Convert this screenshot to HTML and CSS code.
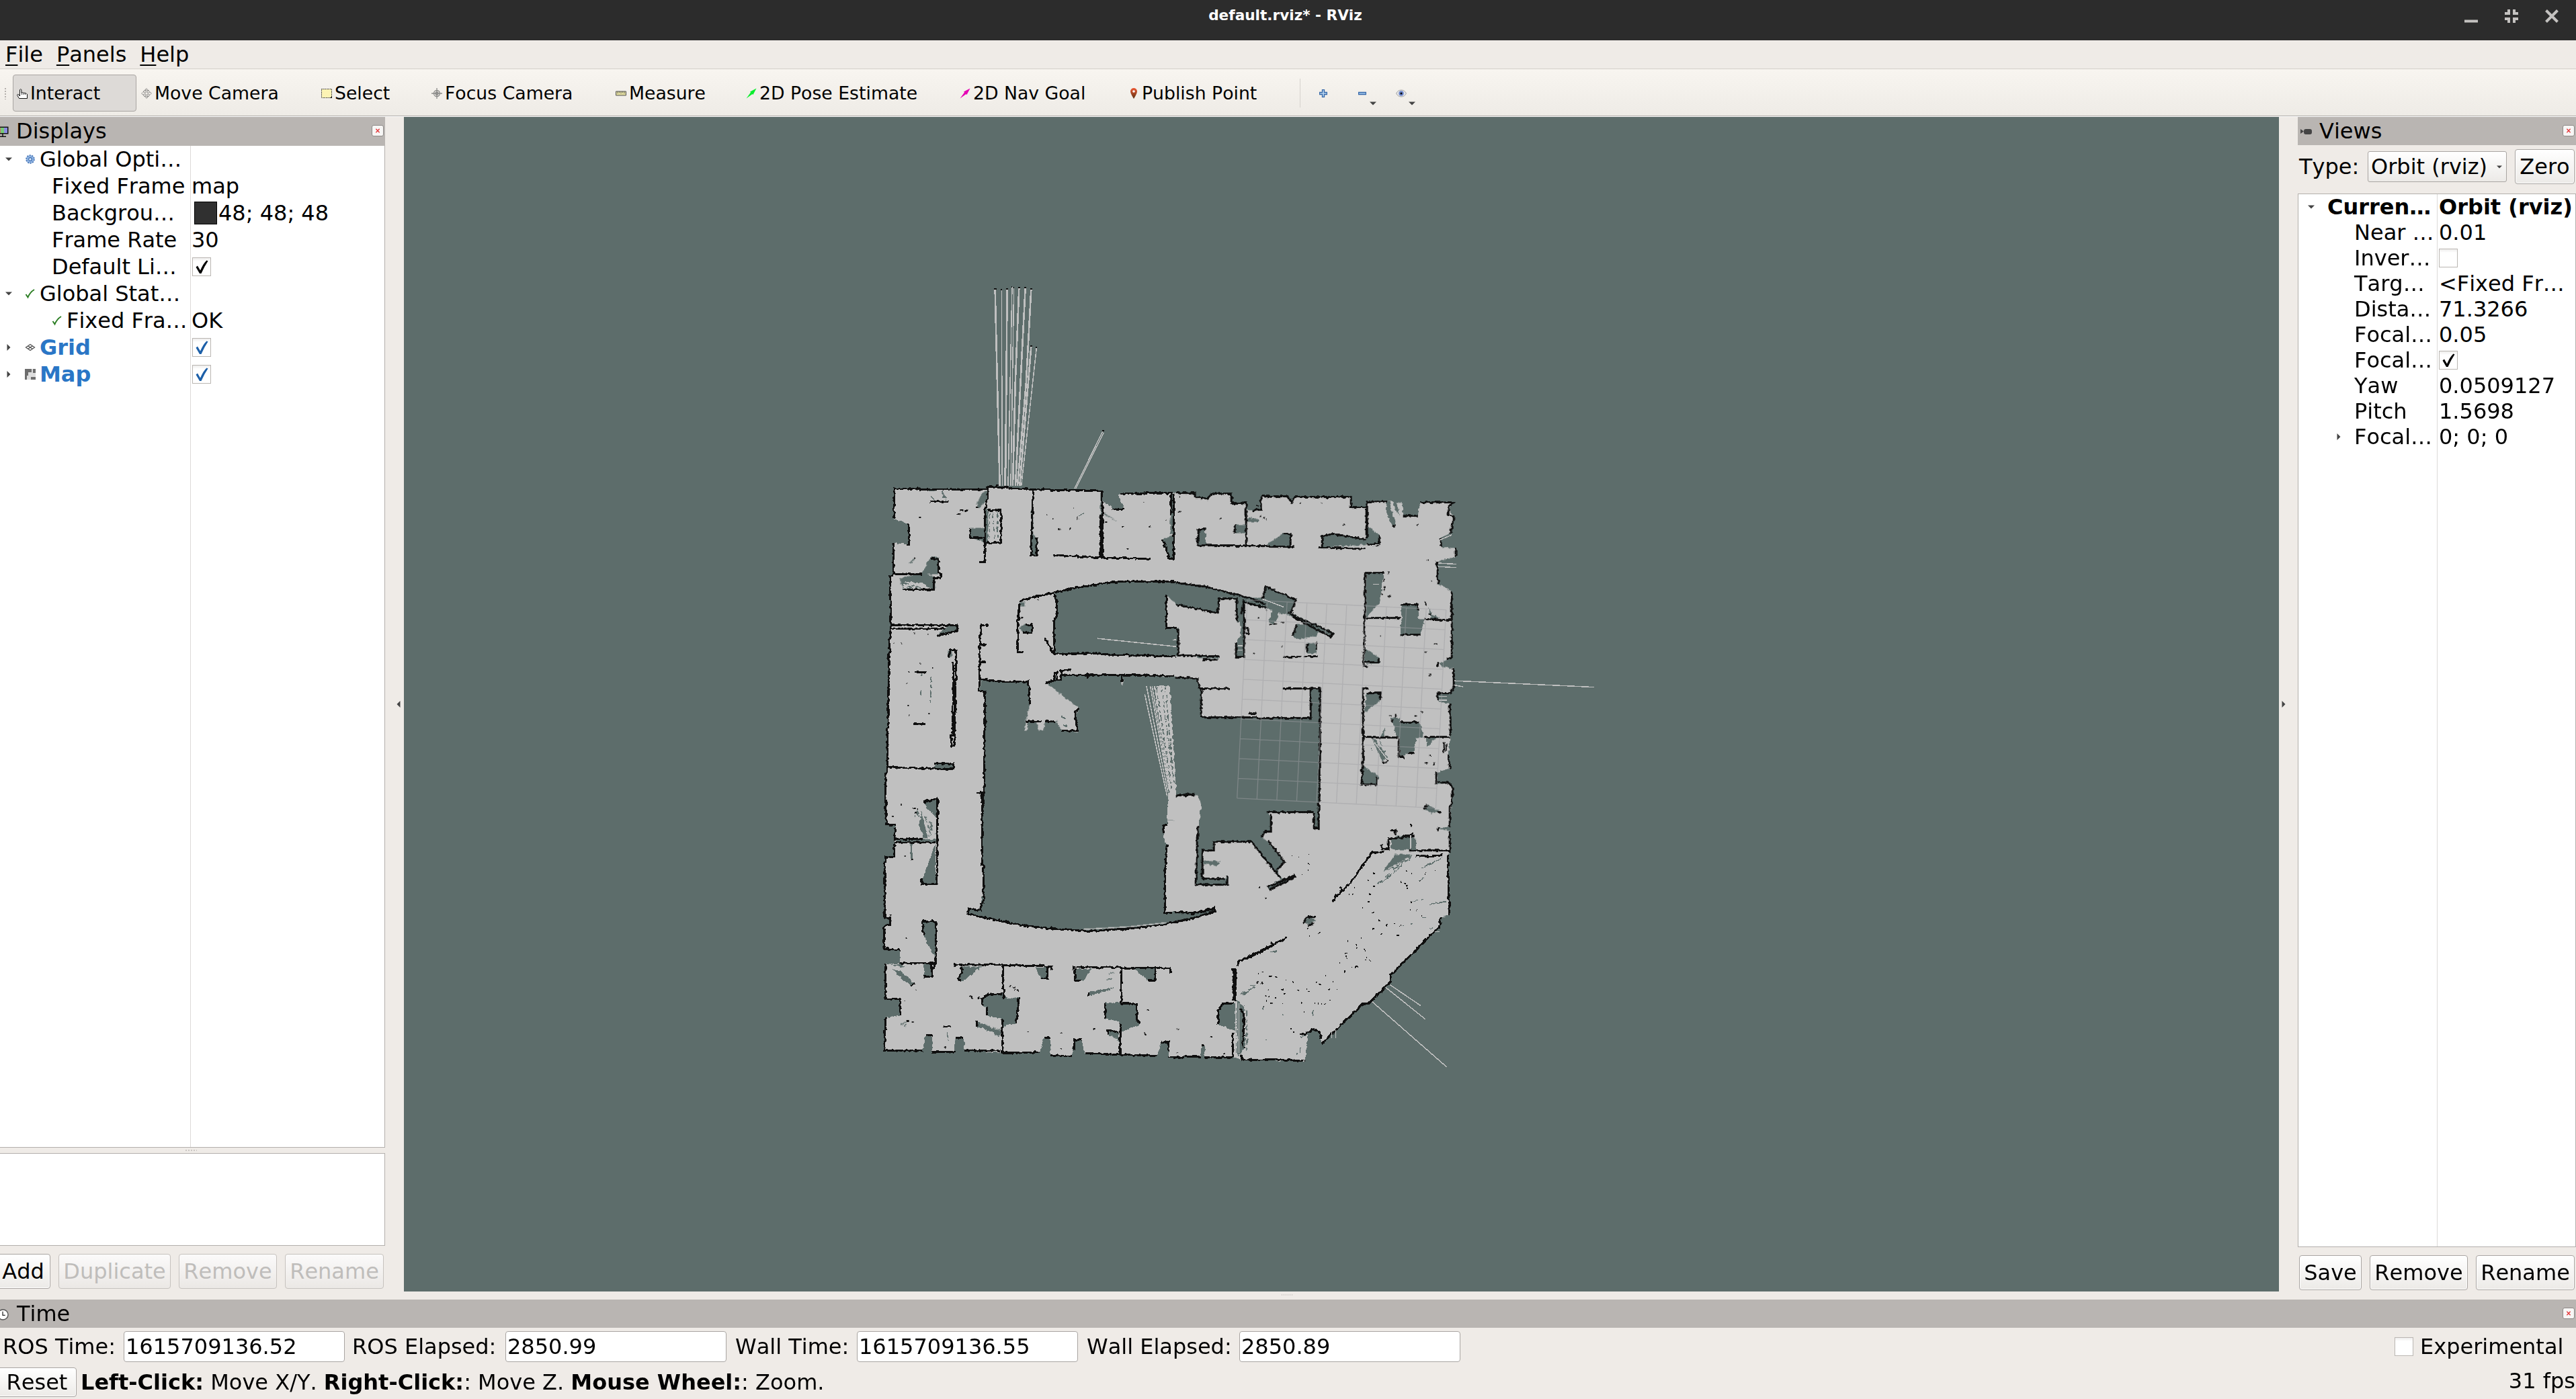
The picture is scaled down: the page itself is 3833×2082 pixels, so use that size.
FILE: index.html
```html
<!DOCTYPE html>
<html lang="en">
<head>
<meta charset="utf-8">
<title>default.rviz* - RViz</title>
<link rel="stylesheet" href="styles.css">
</head>
<body>
<svg class="defs" aria-hidden="true">
  <defs>
    <symbol id="i-close" viewBox="0 0 18 17"><path d="M6 5.500 12 11.500M12 5.500 6 11.500" stroke="#e4393c" stroke-width="1.600" fill="none"/></symbol>
    <symbol id="i-check" viewBox="0 0 28 28"><path d="M5.500 14.500 8 12.500 12 19.500 Q16.500 9 21.500 4.500 L23.500 5.500 Q18 13.500 13.500 24 L11 24 Z" fill="currentColor"/></symbol>
    <symbol id="i-tick" viewBox="0 0 16 16"><path d="M1.500 9 4.500 13.500 Q7.500 6 14 2" stroke="#2a7d22" stroke-width="1.900" fill="none"/></symbol>
    <symbol id="i-down" viewBox="0 0 10 6"><path d="M0 .5h10L5 5.500z" fill="#444"/></symbol>
    <symbol id="i-right" viewBox="0 0 6 10"><path d="M.5 0v10L5.500 5z" fill="#444"/></symbol>
    <symbol id="i-arrow" viewBox="0 0 16 16"><path d="M.5 15.500 7 6.500 6 5.500 15.500.5 10.500 10 9.500 9z" fill="currentColor"/></symbol>
  </defs>
</svg>

<header class="titlebar">
  <h1>default.rviz* - RViz</h1>
  <div class="window-buttons">
    <svg viewBox="0 0 20 20"><path d="M0 17.500h20" stroke="#c4c2c0" stroke-width="4"/></svg>
    <svg viewBox="0 0 20 20"><path d="M0 6h6V0M14 0v6h6M0 14h6v6M14 20v-6h6" stroke="#c4c2c0" stroke-width="4" fill="none"/></svg>
    <svg viewBox="0 0 20 20"><path d="M1.500 1.500 18.500 18.500M18.500 1.500 1.500 18.500" stroke="#c4c2c0" stroke-width="4"/></svg>
  </div>
</header>

<nav class="menubar"><span><u>F</u>ile</span><span><u>P</u>anels</span><span><u>H</u>elp</span></nav>

<div class="toolbar">
  <i class="grip"></i>
  <div class="tool active t-interact"><svg viewBox="0 0 16 16"><path d="M4.500 9V2.500q1.200-1.800 2.400 0V7q1.500-1.200 2.500.3 1.600-.9 2.500.5 1.800-.8 2.600.7 1 .2 1 1.500v5.500h-12L.5 10.500q.6-2.200 2.500-.5l1.500 2z" fill="#fff" stroke="#111" stroke-width="1"/><path d="M7.500 7v3M10 7.500V10M12.500 8v2" stroke="#111" stroke-width=".8"/></svg>Interact</div>
  <div class="tool t-move"><svg viewBox="0 0 16 16"><path d="M8 .5 11 4H9v3h3V5l3.500 3-3.500 3V9H9v3h2l-3 3.500L5 12h2V9H4v2L.5 8 4 5v2h3V4H5zM3.500 4.500Q8 1.500 12.500 4.500M3.500 11.500Q8 14.500 12.500 11.500" fill="none" stroke="#666" stroke-dasharray="1 .6"/></svg>Move Camera</div>
  <div class="tool t-select"><svg viewBox="0 0 16 16"><path d="M.5 1.500h15v13H.5z" fill="#fcf3b4" stroke="#333" stroke-dasharray="1.500 1"/><path d="M13 15h3v-3z" fill="#111"/></svg>Select</div>
  <div class="tool t-focus"><svg viewBox="0 0 16 16"><path d="M8 0v16M0 8h16M3.500 8a4.500 4.500 0 1 0 9 0 4.500 4.500 0 1 0-9 0M6 8a2 2 0 1 0 4 0 2 2 0 1 0-4 0" fill="none" stroke="#8a8a88" stroke-width="1.300"/></svg>Focus Camera</div>
  <div class="tool t-measure"><svg viewBox="0 0 16 16"><path d="M.5 5h15v6H.5z" fill="#ddd89c" stroke="#555"/><path d="M3 5v3M5.500 5v2M8 5v3M10.500 5v2M13 5v3" stroke="#555" stroke-width=".8"/></svg>Measure</div>
  <div class="tool t-pose"><svg class="green"><use href="#i-arrow"/></svg>2D Pose Estimate</div>
  <div class="tool t-nav"><svg class="magenta"><use href="#i-arrow"/></svg>2D Nav Goal</div>
  <div class="tool t-point"><svg viewBox="0 0 16 16"><defs><linearGradient id="pin" x2="0" y2="1"><stop offset="0" stop-color="#ef5a35"/><stop offset="1" stop-color="#5a3010"/></linearGradient></defs><path d="M8 0a5 5 0 0 1 5 5q0 3-5 11Q3 8 3 5a5 5 0 0 1 5-5z" fill="url(#pin)"/><circle cx="8" cy="5" r="1.800" fill="#fff"/></svg>Publish Point</div>
  <i class="sep"></i>
  <div class="mini"><svg viewBox="0 0 12 12"><path d="M4.500.5h3v4h4v3h-4v4h-3v-4h-4v-3h4z" fill="#b6d3ef" stroke="#3567a8" stroke-width="1.300"/></svg></div>
  <div class="mini"><svg viewBox="0 0 12 12"><path d="M.5 4.500h11v3H.5z" fill="#a9cdf0" stroke="#3567a8" stroke-width="1.300"/></svg><svg class="drop"><use href="#i-down"/></svg></div>
  <div class="mini eye"><svg viewBox="0 0 16 12"><path d="M.5 6Q3 1 8 1t7.500 5Q13 11 8 11T.5 6z" fill="#e4e4e4" stroke="#a5a5a5"/><circle cx="8" cy="6" r="3.700" fill="#6c86cc"/><circle cx="8" cy="6" r="1.500" fill="#000"/></svg><svg class="drop"><use href="#i-down"/></svg></div>
</div>

<main class="workspace">
  <section class="displays">
    <div class="dock-title"><svg class="monitor" viewBox="0 0 18 16"><path d="M0 .5h16.500v11H0" fill="#111"/><path d="M0 2h6v8H0z" fill="#c76d6d"/><path d="M5 2h5v8H5z" fill="#77c977"/><path d="M10 2h5v8h-5z" fill="#8b8be0"/><path d="M8 11v4M3 15.200h10" stroke="#111" stroke-width="1.500"/></svg><span>Displays</span><svg class="close"><use href="#i-close"/></svg></div>
    <div class="tree">
      <div class="row"><div class="name"><svg class="down"><use href="#i-down"/></svg><svg class="ico" viewBox="0 0 16 16"><circle cx="8" cy="8" r="5.800" fill="#8fb4e3" stroke="#4a78b8" stroke-width="2" stroke-dasharray="2.200 1.400"/><circle cx="8" cy="8" r="4.800" fill="#8fb4e3"/><circle cx="8" cy="8" r="2.300" fill="#dbe8f8" stroke="#3d6cae" stroke-width="1.200"/></svg>Global Opti…</div></div>
      <div class="row child"><div class="name">Fixed Frame</div><div>map</div></div>
      <div class="row child"><div class="name">Backgrou…</div><div><i class="swatch"></i>48; 48; 48</div></div>
      <div class="row child"><div class="name">Frame Rate</div><div>30</div></div>
      <div class="row child"><div class="name">Default Li…</div><div><i class="box"><svg><use href="#i-check"/></svg></i></div></div>
      <div class="row"><div class="name"><svg class="down"><use href="#i-down"/></svg><svg class="ico"><use href="#i-tick"/></svg>Global Stat…</div></div>
      <div class="row child"><div class="name"><svg class="ico"><use href="#i-tick"/></svg>Fixed Fra…</div><div>OK</div></div>
      <div class="row on"><div class="name"><svg class="right"><use href="#i-right"/></svg><svg class="ico" viewBox="0 0 16 16"><path d="M8 3.500 14.500 8 8 12.500 1.500 8zM4.700 5.700l6.600 4.600M11.300 5.700 4.700 10.300" fill="none" stroke="#555" stroke-width="1.300"/></svg>Grid</div><div><i class="box"><svg><use href="#i-check"/></svg></i></div></div>
      <div class="row on"><div class="name"><svg class="right"><use href="#i-right"/></svg><svg class="ico" viewBox="0 0 16 16"><path d="M0 0h16v16H0z" fill="#ddd"/><path d="M0 0h10v5H5v5H3v6H0zM12 0h4v6h-4zM9 12h7v4H9z" fill="#6d6d6d"/></svg>Map</div><div><i class="box"><svg><use href="#i-check"/></svg></i></div></div>
    </div>
    <div class="dots"></div>
    <div class="help"></div>
    <div class="buttons left-buttons"><button class="b-add">Add</button><button class="b-dup" disabled>Duplicate</button><button class="b-rem" disabled>Remove</button><button class="b-ren" disabled>Rename</button></div>
  </section>

  <div class="splitter"><svg viewBox="0 0 6 10"><path d="M5.500 0v10L.5 5z" fill="#444"/></svg></div>

  <svg class="view" viewBox="601 174 2790 1748">
    <defs>
      <filter id="cells" filterUnits="userSpaceOnUse" x="1250" y="380" width="1180" height="1260" color-interpolation-filters="sRGB">
        <feTurbulence type="fractalNoise" baseFrequency=".18" numOctaves="2" seed="7" result="m"/>
        <feDisplacementMap in="SourceGraphic" in2="m" scale="5" xChannelSelector="R" yChannelSelector="G"/>
      </filter>
    </defs>
    <g filter="url(#cells)" class="map">
      <!-- scanned floor, one outline per quarter of the building -->
      <g class="floor">
        <path transform="translate(1300 400) scale(.3333 .523)" d="M92,625L505,628 508,618 710,628 1018,632 1025,662 1070,683 1118,683 1090,640 1350,637V1568H56L52,1450 60,1420 66,1200 72,1025 78,1010 72,875 88,868 90,780 158,785V725L92,712Z"/>
        <path transform="translate(1750 600) scale(.3333 .523)" d="M-3,255L85,256 90,268 140,272 160,257 248,258V285L312,288 318,305 378,303 380,265H500L515,283 528,267H780L782,295H848L852,278H940L1008,285 1015,320H1080L1088,282H1240L1215,300 1242,325 1225,370 1175,385 1185,410 1250,412V437L1165,450 1170,515 1230,535V725L1170,740 1185,750 1238,755 1240,805 1225,825 1168,828 1172,850 1222,855 1225,945 1215,1000 1222,1040 1165,1050V1085L1220,1080 1235,1095 1230,1140 1222,1205 1170,1210 1222,1218V1280L1215,1285 1218,1455 1180,1465 1178,1490 1060,1565H-3Z"/>
        <path transform="translate(1300 1180) scale(.38267 .33333)" d="M45,0L48,140 85,145 82,207 80,285 45,290 42,555 65,562 62,590 40,598V693L103,703V760L45,765V920L103,925V995L45,1005 42,1150 190,1152 200,1085 228,1088V1158L310,1162 318,1095 350,1097 355,1152 500,1160H645L662,1092 688,1095V1172L770,1175 780,1103H808L822,1163 950,1168 1100,1172 1120,1112H1145L1148,1180H1270L1275,1130H1288L1285,1180H1410L1430,1190H1568V0Z"/>
        <path transform="translate(1800 1100) scale(.33333)" d="M0,500H1060L1070,785 1030,795 1025,840 985,875 810,1050 808,1080 710,1180 685,1180 500,1360 495,1320 465,1293 440,1310 425,1440 140,1430 105,1420 0,1418Z"/>
      </g>

      <!-- unexplored pockets -->
      <g class="void">
        <g transform="translate(1300 400) scale(.3333 .523)">
          <path d="M806,922L900,908 1000,896 1130,889 1352,892V950L1335,945 1308,928V1022H1352V1103L1060,1098 960,1093 820,1096 806,1095V995L818,990V950Z"/>
          <path d="M497,1205L475,1200 480,1168 570,1174 692,1175 697,1240 680,1285 675,1315 683,1315 690,1290 730,1290 735,1315 758,1312 765,1290 815,1285 838,1315 910,1318 900,1270 918,1250 770,1180 805,1172V1150L820,1172H835V1155L1105,1155 1108,1185 1115,1185 1112,1157 1352,1162V1520L1340,1568H484L490,1490Z"/>
          <path d="M430,740L497,735V685H512V780L430,765ZM455,682L480,640 507,632V655L470,682ZM712,640V755L728,765V815H702V700ZM1290,770L1340,757V825H1320ZM650,1020L680,1010 710,1012 708,1035H665ZM280,1045L330,1015H375V1030ZM240,835L258,820H292L290,870H215ZM115,880L225,866 275,878V912H130ZM270,1409H355V1422H270ZM225,1520L288,1508V1568ZM332,1088H350V1105H332ZM652,948H672V960H652ZM125,862L180,825H185ZM1013,640H1022V820H1013ZM1325,640H1335V755H1325ZM1030,695L1080,716 1085,718 1030,700Z"/>
        </g>
        <g transform="translate(1750 600) scale(.3333 .523)">
          <path d="M-3,512L130,522 300,550 385,556 400,522 535,560 512,597 705,652 700,665 520,608 455,595V610L435,630 410,622 430,590 300,565 303,720H270V675L290,660 285,622H268L272,560 200,552 190,557V597L-3,573ZM-3,640H12V717H-3ZM520,665L540,628H600L650,645 620,662 550,672ZM585,682H620L628,712H585Z"/>
          <path d="M-3,780L95,785 107,812 113,815V893L600,897V815L643,812 640,1160 637,1210H615V1163H408L428,1185 425,1220 395,1222 380,1237 400,1243 485,1305 450,1328 475,1355 532,1340 536,1348 415,1385 408,1377 465,1355 335,1248 172,1247 168,1270H118V1352L210,1355 225,1345 228,1370H88L97,1240 112,1140 95,1113 -3,1118Z"/>
          <path d="M100,358H133V403H95ZM262,345H312V370H262ZM318,325L370,330 365,338H318ZM400,405L480,370H512V410ZM652,378L700,370 848,388V348L908,375V400L655,410ZM940,280L952,280 980,345 965,350 940,310ZM968,280L982,280 998,318 985,310ZM850,485H925L915,545 905,570 850,608ZM1005,570H1078L1085,615H1108L1090,658H1003ZM842,698L908,725V740H842ZM850,825H913V845L842,880ZM912,950L935,920 925,950ZM960,895L1000,895V950H985ZM1000,905H1088L1105,950 1068,952 1065,990 1000,1005 993,955ZM875,955L885,955 945,1008 920,1020ZM835,1033L905,1060 895,1085H830ZM1105,1155L1120,1142 1185,1163 1140,1165ZM960,1270V1240L985,1232H1045L1070,1240V1270ZM920,1335L980,1283 1055,1285ZM1115,950L1160,952 1120,978ZM1125,580L1145,603 1180,610 1140,615ZM118,1300L200,1305 185,1316 125,1312ZM-3,1448L80,1450 165,1438V1445L-3,1475ZM572,1470L600,1462 620,1470 600,1485 575,1482ZM90,720H185V726H90Z"/>
        </g>
        <g transform="translate(1300 1180) scale(.38267 .33333)">
          <path d="M422,0L428,420 418,490 415,525 370,515 365,540 500,575 600,597 720,610 850,617 1000,605 1130,587 1250,555 1325,530 1322,515 1290,520 1250,537 1170,530 1133,537V350L1140,235 1125,190 1127,145 1143,140 1140,0Z"/>
          <path d="M195,40L248,30V115L212,75ZM180,100L190,105 210,205H195L178,140ZM85,208H245V222H85ZM165,85L172,70 178,110ZM142,225H152V300H145ZM240,228V408H188V385ZM192,575H242V740L195,640ZM70,785L110,800 155,850 145,862 120,840ZM195,762H228V822H195ZM345,778L420,775 350,840 330,835ZM628,780H675V830H650ZM785,785H850L815,838H785ZM1010,785H1093V838H1070ZM420,920L445,902 505,895 520,920 565,912 555,1025 500,1045V1008L440,995V960L420,950ZM835,890L935,868V872L840,905ZM900,940L960,935 1022,943V1010L1038,1025 1030,1040 965,1065 955,1020 900,1010ZM400,1020L495,1065V1085L405,1045ZM912,1060L955,1072V1120L945,1095 915,1080ZM1340,970L1355,940H1405V1060L1340,1035ZM1410,920L1440,960 1445,1130 1415,1180ZM285,1045L292,1110 285,1090ZM60,765H110L120,780ZM1425,905L1480,865 1445,900ZM1540,710L1568,705V712Z"/>
        </g>
        <path transform="translate(1800 1100) scale(.33333)" d="M265,952L300,940 298,950ZM755,645L800,610 850,575 770,640ZM930,580L1045,525 990,560ZM905,728L955,715ZM980,735L1060,722V727L990,739ZM948,796H965V799H948ZM930,635L955,615V620ZM455,1210H463V1235H456ZM1020,790L1060,785V788Z"/>
      </g>

      <!-- partially scanned areas, streaked by the laser -->
      <g class="floor" transform="translate(1300 400) scale(.3333 .523)">
        <path d="M1250,1188H1322L1352,1500V1568H1310L1318,1460Z"/>
        <path d="M515,690H565V778H515ZM130,908L140,890 215,895 265,913Z"/>
      </g>
      <g class="streak" transform="translate(1300 400) scale(.3333 .523)">
        <path d="M1262,1190L1330,1480M1285,1190L1336,1440M1302,1190L1342,1470M518,695V775M532,692L540,775M552,692V770M130,893L240,912M150,905L230,912M250,632H280M255,645L275,660M305,632L325,660M310,650H325M215,1150V1160M212,1200V1215M255,1160V1240M918,705L935,693M838,1275L855,1278M845,1300H860M185,1545V1568M212,1545L218,1568"/>
      </g>
      <g class="streak" transform="translate(1800 1100) scale(.33333)">
        <path d="M740,10L775,95M725,35V55M760,10L790,80M785,615L860,560M800,585L905,520M820,580L900,530M135,1140L205,1105M180,1100L215,1100M905,725L955,715M750,645L770,630M980,845H995M118,1190V1410M128,1280V1400M405,1380V1400M390,1400V1410M155,1190V1210M320,1232H326M248,1343H254M218,1248H222M240,1195V1210M970,30L1000,5M405,1330L430,1320M140,1350V1420M860,832H868M895,825H903"/>
      </g>
      <g class="streak" transform="translate(1300 1180) scale(.38267 .33333)">
        <path d="M200,105L225,200M215,130L235,155M212,150L240,180M225,135V165M195,150L220,205M350,775H410M430,1035L495,1060M440,1050L490,1090M450,1055L495,1080M905,835L935,830M915,810L935,800M105,1035L130,1020M120,1045L130,1030M925,1085L950,1100M520,920L540,925M1450,970V1160"/>
      </g>

      <!-- walls -->
      <g class="wall">
        <g transform="translate(1300 400) scale(.3333 .523)">
          <path d="M92,712V625L250,628 505,628M497,690L508,655V620L570,622 710,628 1018,632 1022,690V820M1013,700V820M1065,683H1118M1100,640L1335,637M158,725V785H145M90,780V868L215,869M88,872L72,875 78,1010 70,1060 66,1200 60,1420 52,1450 56,1568"/>
          <path d="M497,690V782V835H472M430,740V765H495M510,688H568V780H497M452,680H470M712,630L708,700 702,815H728V765M805,815L1025,822 1235,825M1340,640V825H1320L1290,770M1328,640V700"/>
          <path d="M652,945L730,932 900,908 1050,893 1130,889 1350,891M652,950L645,1000 642,1090H667M665,1035H708V1012H680M806,925L818,950V992L806,997V1095M765,1050L805,1097 960,1094 1060,1098 1350,1103M768,1178L805,1172V1150H818V1172H835V1142H880M835,1155L1000,1155 1240,1157 1340,1160M955,1150V1165M1110,1155V1175M1308,928V1022H1350"/>
          <path d="M510,1015H480L474,1070H505M474,1070V1120H503M474,1120V1168L570,1174 640,1175 692,1174 697,1240M680,1287H750M765,1287H810M838,1315H910L898,1262 918,1250M474,1168L470,1200 497,1204 492,1490H459M489,1490L484,1568"/>
          <path d="M75,1015H375V1030L280,1045M75,1024H320M368,1085H343L335,1105M367,1085V1140L360,1358H348V1325M357,1120L352,1330M60,1418L355,1424V1408H270M182,1148H236M178,1295H230M125,913H270V880H300V865M290,825V868M255,825H292M250,662H335M225,1520L285,1507 288,1568"/>
        </g>
        <g transform="translate(1750 600) scale(.3333 .523)">
          <path d="M0,255L85,256V268L140,272 160,257 248,258V285H312V404M345,305L378,303 380,265H500L515,283 528,267H780V295H848M852,385V280H940M1012,320H1080M1088,282H1240L1215,295V318L1242,325 1225,370M1178,385L1185,410M1250,412V437M1165,450L1170,515M1230,535V725L1208,728M1168,738V750M1238,755L1240,805 1225,825H1168V845M1222,855L1225,945M1215,1000L1222,1040M1163,1050V1085M1165,1078L1215,1080 1235,1095 1230,1140 1222,1150V1205M1170,1205V1218M1222,1218V1280"/>
          <path d="M95,404L312,406 530,409M100,358L97,400M100,358H130M262,345V370M480,372H512V408M635,410L845,415M652,410V378L700,372 780,380 848,388M850,300V385M908,375V403H850M965,350H980"/>
          <path d="M0,511L130,522 300,550 400,572M500,597L705,655 690,665 520,608M385,556L400,522 535,560 512,597M300,565L400,582M0,573L185,597 193,555H270V622M290,600L303,560V722H268V680M0,642L10,645V717L190,720M120,730H185M520,662L540,630M480,722H560M570,720H632M585,685V710M300,640H322V655H300"/>
          <path d="M925,483H845L842,610 838,745M845,612H1000M1110,615L1228,617M1005,572H1078V590M1003,658H1092M836,748H855M842,738H905V725M857,812H835V1000L828,1085H895V1065M850,825H913V845M838,950L990,952M1110,950H1222M1000,907H1088M993,955V1005H1020M1035,995H1065"/>
          <path d="M0,782L60,780 95,785 107,812H240M113,815V893L600,897V815M475,812H643L642,1000 636,1210H615V1165M615,1163H405M425,1170V1220H395L380,1237M410,1245L485,1305 450,1328M0,1117L80,1112M97,1205L88,1370H228V1345M215,1352H118V1272H168V1247H335L465,1350M408,1378L532,1342M415,1385L536,1347M0,1475L90,1463 172,1445V1438L80,1452 0,1448M1105,1155L1120,1143M1170,1163H1185M955,1215H980V1230M920,1255V1268H950V1240L1065,1232M1040,1272L1222,1273M1090,1287H1115M570,1480L580,1463 622,1462M590,1487L615,1480M325,883H360"/>
        </g>
        <g transform="translate(1300 1180) scale(.38267 .33333)">
          <path d="M45,0L48,140 85,143M82,155V207L190,205M82,222H240M80,225V288H45L42,400V555M42,560H65V590H48L40,600V693L103,703M103,762H240V735M195,38L248,28V205L245,408H188V380M195,640L190,575H242V760L232,785M225,765V822H195M46,765V920H103V990M46,1005L42,1150 190,1152M200,1083H230M228,1158H310L315,1150M318,1095H348M355,1152H495M145,862L158,852M270,1042H298"/>
          <path d="M422,0V320L428,325V490L418,495V525L370,517 365,540 500,573 600,595 720,609 850,617 1000,605 1130,587 1250,557 1325,532V512L1250,537 1170,532M1160,535H1133L1133,350 1140,235M1127,180V145L1143,140M1180,12H1250"/>
          <path d="M314,780V765L500,768 690,775V792M340,775L345,800 328,825 335,840M503,770L505,920M675,780V830H650M775,790V777L960,780 1155,783V808M783,785V838H808M963,790V940L1022,943V1010L1035,1030M960,1030L958,1165M1093,785V838H1070M835,890V905M900,940V1008M565,912L555,1025M500,1010V1160H645M662,1094H690M688,1172L770,1175M780,1150V1103H810M822,1163L950,1168 1100,1174M1118,1113H1145V1150M1145,1180L1270,1178M1275,1128H1288M1285,1180H1395M402,1018V1045M422,950V920L445,900H500M440,960V995M1340,1035V970L1358,940H1400M1400,787V930M1390,787H1410M1408,790V930M1396,1068V1180M912,1080V1060L955,1070M1415,775L1420,752 1480,725 1540,690"/>
        </g>
        <g transform="translate(1800 1100) scale(.33333)">
          <path d="M780,505L723,507 640,625 600,670 560,705 547,728M580,660L600,680M128,1010V993L270,925 345,888M270,905L285,925M1062,515L1070,785M1030,795L1025,840 985,875 850,1012 810,1050V1080L710,1180 685,1180 500,1360M497,1335L490,1310 465,1295 430,1315 405,1318M140,1410L150,1433 300,1430 425,1437M137,1200L153,1230V1300L145,1370M860,430L905,425M920,520L960,525 1040,518M455,795H475"/>
        </g>
      </g>
      <g class="speck">
        <path transform="translate(1800 1100) scale(.33333)" d="M367,522h3M392,525h6M438,517h5M438,558h8M440,585h5M412,605h5M218,661h6M248,711h7M435,842h3M442,879h4M487,867h4M730,600h8M733,658h5M707,630h3M710,692h9M705,730h8M680,752h4M727,775h5M755,811h6M787,832h5M820,824h6M765,870h5M838,880h4M848,640h6M875,592h4M900,600h6M880,665h5M960,600h3M1005,590h3M898,728h4M920,763h5M893,762h4M945,790h3M850,830h3M730,845h4M615,900h4M672,890h7M650,920h6M655,930h6M690,943h6M605,953h8M607,970h6M608,978h6M698,975h5M693,988h6M715,988h6M578,998h4M632,1017h5M648,1017h14M600,1037h6M517,1055h5M548,1083h4M478,1087h3M490,1095h7M432,1115h4M438,1126h5M392,1122h8M370,1083h5M335,1077h5M320,1115h10M325,1120h7M330,1138h7M292,1062h8M268,1060h8M238,1038h4M232,1085h4M235,1095h8M262,1148h8M292,1154h6M272,1178h6M320,1183h4M405,1182h5M467,1178h4M482,1178h4M497,1182h4M512,1182h5M535,1163h4M532,1120h5M568,1117h4M362,1290v6M372,1306h6M420,1218h4M248,1170h4M215,1048h4M898,385h6M985,75h6M1000,105v14M965,108h5M770,105h6M790,95h8M850,83h20M885,60h30M635,690h8M620,690h5M645,662h4M435,790h10M935,632h4M870,645h5M880,655h4"/>
        <path transform="translate(1300 400) scale(.3333 .523)" d="M385,688h14M372,698h12M410,688h8M202,709h8M182,822h6M768,702h4M800,712h6M825,741h6M875,740h4M910,710h3M888,678h3M1110,734h8M1228,734h8M1033,720h8M1130,797h5M1300,716h4M1203,665h4M205,1125h4M153,1147h6M260,1135h6M147,1179h4M150,1243h6M157,1272h4M243,1265h8M85,1065h4M120,1067h4M240,1042h4M120,1524h4M83,1558h6M180,1038h5M545,616h14M730,940h8M655,992h15"/>
        <path transform="translate(1750 600) scale(.3333 .523)" d="M12,308h8M15,267h6M195,328h8M550,283h8M650,283h4M743,345h8M1072,347h8M370,320h8M385,328h10M400,330h8M360,292h8M948,478v8M930,500v8M930,520v12M920,540v8M945,550h10M1122,447h5M910,663h5M1155,685h12M1112,708h5M1130,773h8M1065,890h10M1095,878h8M950,888h12M965,900v10M980,885v12M1110,1025h14M1130,1000h8M1150,1022v10M1048,1202h8M365,610h6M345,712h4M470,692h4M625,680v25M1115,565v12M1130,600h10M1195,965v30M1205,970v20M400,590h4M420,630h8M438,628h12M470,625h12M1140,505h4M920,1022h25"/>
        <path transform="translate(1300 1180) scale(.38267 .33333)" d="M105,52h4M72,105h6M152,70h10M170,68v8M160,90h10M142,300h12M122,280v6M65,547h4M125,650h5M120,930h2M160,878h5M375,905l8,12M405,915h8M415,918h5M530,860h6M545,865v6M548,880h6M562,880v6M598,1065h8M725,1070h8M853,1056h8M725,1143h7M1062,970h8M1050,1074l10,8M1182,1050v8M1308,1090h8M1178,1162h5M272,1133l6,6M125,1018h12M148,1024h8M375,1145l15,5M1495,840v12M1510,850v6M1523,905h6M1535,880h4M1565,822h4M1545,938h6M1523,472h6M1497,422h5M1515,957h3M1362,1160v6M1512,798h4M1436,985h8M1438,1010h6M1436,1050h8M1440,1080h6M1432,1110h8M1436,1135h6"/>
      </g>
    </g>

    <!-- single laser returns that escaped the building -->
    <g class="map ray">
      <g transform="translate(1300 400) scale(.3333 .523)">
        <path class="wide" d="M542,60L552,330 563,618M596,60L588,618M649,55L632,330 621,618M677,55L655,330 633,618M703,60L680,330 642,618M703,222L652,618"/>
        <path d="M571,60L574,618M618,52L600,618M626,55L612,618M727,225L659,618M595,300L584,618M1023,462L897,625M1027,466L903,625M1000,1052L1350,1075M1335,1057L1350,1055M1210,1210L1310,1500M1218,1188L1314,1490M1235,1188L1318,1480M1243,1188L1320,1470"/>
      </g>
      <g transform="translate(1750 600) scale(.3333 .523)"><path d="M1242,790L1350,793 1865,808M1240,802L1282,807M1170,455L1250,458M1170,465L1250,468M1172,835H1210M1172,845H1210M275,690H298M275,703H298M880,515H905M385,557L480,580M855,408L905,402M1045,1235V1270M885,965L945,1015M1175,390L1230,375"/></g>
      <g transform="translate(1300 1180) scale(.38267 .33333)"><path d="M815,609L1000,597 1140,579"/></g>
      <g transform="translate(1800 1100) scale(.33333)"><path d="M805,1097L942,1190M785,1108L962,1250M725,1172L1058,1464M115,1180V1420M122,1180V1420M130,1180V1400M435,1320L420,1440M562,1300V1335M545,1305V1335M1005,860H1025M897,430V485"/></g>
    </g>
    <g class="map speck"><path transform="translate(1300 400) scale(.3333 .523)" d="M537,57h12M568,59h4M591,58h10M614,51h4M623,54h3M645,53h10M672,53h8M699,57h9M698,219h10M724,224h5M1020,461h10"/></g>
    <path class="grid" transform="matrix(29.57 1.464 -1.53 29.500 1856 892.900)" d="M0,0V10M1,0V10M2,0V10M3,0V10M4,0V10M5,0V10M6,0V10M7,0V10M8,0V10M9,0V10M10,0V10M0,0H10M0,1H10M0,2H10M0,3H10M0,4H10M0,5H10M0,6H10M0,7H10M0,8H10M0,9H10M0,10H10"/>
  </svg>

  <div class="splitter right-split"><svg viewBox="0 0 6 10"><path d="M.5 0v10L5.500 5z" fill="#444"/></svg></div>

  <section class="views">
    <div class="dock-title"><svg class="cam" viewBox="0 0 18 16"><path d="M0 5v7l5-3.500z" fill="#444"/><rect x="5" y="5" width="12" height="8" rx="3" fill="#444"/></svg><span>Views</span><svg class="close"><use href="#i-close"/></svg></div>
    <div class="type-row"><label>Type:</label><div class="combo">Orbit (rviz)<svg><use href="#i-down"/></svg></div><button class="zero">Zero</button></div>
    <div class="tree">
      <div class="row head"><div class="name"><svg class="down"><use href="#i-down"/></svg>Curren…</div><div>Orbit (rviz)</div></div>
      <div class="row"><div class="name">Near …</div><div>0.01</div></div>
      <div class="row"><div class="name">Inver…</div><div><i class="box"></i></div></div>
      <div class="row"><div class="name">Targ…</div><div>&lt;Fixed Fr…</div></div>
      <div class="row"><div class="name">Dista…</div><div>71.3266</div></div>
      <div class="row"><div class="name">Focal…</div><div>0.05</div></div>
      <div class="row"><div class="name">Focal…</div><div><i class="box"><svg><use href="#i-check"/></svg></i></div></div>
      <div class="row"><div class="name">Yaw</div><div>0.0509127</div></div>
      <div class="row"><div class="name">Pitch</div><div>1.5698</div></div>
      <div class="row"><div class="name"><svg class="right"><use href="#i-right"/></svg>Focal…</div><div>0; 0; 0</div></div>
    </div>
    <div class="buttons right-buttons"><button class="b-save">Save</button><button class="b-rem">Remove</button><button class="b-ren">Rename</button></div>
  </section>
</main>

<div class="hsplit"></div>

<section class="time">
  <div class="dock-title"><svg class="clock" viewBox="0 0 18 18"><circle cx="9" cy="9" r="8" fill="#fff" stroke="#555" stroke-width="1.500"/><path d="M8.500 4v6h4" stroke="#222" stroke-width="1.300" fill="none"/></svg><span>Time</span><svg class="close"><use href="#i-close"/></svg></div>
  <div class="fields">
    <label class="l1">ROS Time:</label><div class="field">1615709136.52</div>
    <label class="l2">ROS Elapsed:</label><div class="field">2850.99</div>
    <label class="l3">Wall Time:</label><div class="field">1615709136.55</div>
    <label class="l4">Wall Elapsed:</label><div class="field">2850.89</div>
    <div class="experimental"><i class="box"></i>Experimental</div>
  </div>
</section>
<footer class="status"><button>Reset</button><p><b>Left-Click:</b> Move X/Y. <b>Right-Click:</b>: Move Z. <b>Mouse Wheel:</b>: Zoom.</p><span>31 fps</span></footer>
</body>
</html>
```

FILE: styles.css
```css
* { box-sizing: border-box; }
body {
  margin: 0; width: 3833px; height: 2082px; overflow: hidden;
  display: flex; flex-direction: column;
  background: #efebe7; color: #000;
  font: 32px/38px "DejaVu Sans", sans-serif; white-space: nowrap; font-kerning: none;
}
svg { display: block; flex: none; }
.defs { position: absolute; width: 0; height: 0; }
button {
  font: inherit; color: inherit; padding: 0; flex: none; text-align: center; white-space: nowrap;
  border: 1px solid #a9a5a2; border-radius: 4px;
  background: linear-gradient(#fff, #eceae7); box-shadow: inset 0 0 0 1px #fff;
}
button:disabled { color: #bfbdbb; border-color: #c6c2be; background: linear-gradient(#fbfafa, #ebe8e5); box-shadow: none; }

.titlebar { height: 60px; flex: none; background: #2c2c2c; position: relative; display: flex; justify-content: flex-end; }
.titlebar h1 {
  position: absolute; left: 0; right: 8px; top: 8px; margin: 0; text-align: center;
  color: #fff; font-size: 21.600px; line-height: 30px; font-weight: bold;
}
.window-buttons { display: flex; gap: 40px; padding: 14px 26px 0 0; }
.window-buttons svg { width: 20px; height: 20px; }

.menubar { height: 43px; flex: none; display: flex; padding: 2px 0 0 8px; border-bottom: 1px solid #d3cfca; gap: 20px; }
.menubar u { text-decoration-thickness: 2px; text-underline-offset: 4px; text-decoration-skip-ink: none; }

.toolbar {
  height: 71px; flex: none; display: flex; align-items: center; font-size: 26.700px;
  background: linear-gradient(#f8f5f0, #eeebe6); border-bottom: 1px solid #fff;
  box-shadow: inset 0 -1px #b1adaa; padding-top: 1px;
}
.grip { width: 4px; height: 18px; margin: 0 9px 0 6px; flex: none; background: radial-gradient(circle, #b5b1ad 1px, transparent 1.200px) 0 0/4px 4px; }
.tool { height: 55px; padding-left: 5px; padding-top: 1px; display: flex; align-items: center; gap: 4px; flex: none; border: 1px solid transparent; }
.tool svg { width: 16px; height: 16px; }
.tool.active { background: #dddad7; border-color: #a9a5a2; border-radius: 4px; }
.t-interact { width: 184px; } .t-move { width: 268px; } .t-select { width: 164px; }
.t-focus { width: 274px; } .t-measure { width: 194px; } .t-pose { width: 318px; }
.t-nav { width: 251px; } .t-point { width: 262px; }
.t-move { margin-left: 1px; }
.green { color: #0bee2e; } .magenta { color: #e500b4; }
.sep { width: 1px; height: 43px; background: #d6d2cd; margin-left: -1px; flex: none; }
.mini { width: 58px; height: 43px; display: flex; align-items: center; justify-content: center; position: relative; left: 5px; }
.mini svg { width: 12px; height: 12px; }
.eye svg { width: 16px; height: 12px; }
.mini svg.drop { position: absolute; right: 8px; top: 34px; width: 10px; height: 6px; }

.workspace { height: 1748px; flex: none; display: flex; }
.displays { width: 573px; display: flex; flex-direction: column; flex: none; }
.dock-title { height: 43px; flex: none; display: flex; align-items: center; background: #b9b5b2; }
.dock-title .close { width: 18px; height: 17px; margin: 0 2px 2px auto; border: 1px solid #8d8987; border-radius: 3px; background: #f7f6f5; }
.monitor { width: 18px; height: 16px; margin: 0 9px 0 -4px; }
.displays .dock-title span { margin-left: 1px; padding-bottom: 1px; }
.dock-title svg:first-child { overflow: visible; }

.tree { background: linear-gradient(#dcdad8, #dcdad8) 283px 0/1px 100% no-repeat #fff; border: 1px solid #b3afac; }
.displays .tree { height: 1491px; flex: none; border-width: 0 1px 1px 0; }
.row { display: flex; height: 40px; align-items: center; }
.row > div { display: flex; align-items: center; }
.row .name { width: 284px; flex: none; padding-left: 8px; }
.displays .row > div + div { padding-left: 1px; }
.row .down { width: 10px; height: 6px; }
.row .right { width: 6px; height: 10px; margin: 0 2px; }
.row .ico { width: 16px; height: 16px; margin: 0 6px 0 19px; }
.row.child .name { padding-left: 77px; }
.row.child .ico { margin: 0 6px 0 0; }
.row.on { color: #1c5fa8; }
.row.on .name { color: #2a76c6; font-weight: bold; }
.swatch { width: 34px; height: 34px; margin: 0 2px 0 4px; background: #303030; border: 1px solid #000; }
.box { width: 28px; height: 28px; flex: none; margin-left: 1px; border: 1px solid #bab6b2; background: linear-gradient(#eeedec, #fff 5px); display: block; }
.box svg { width: 28px; height: 28px; margin: -1px; }
.dots { height: 8px; flex: none; background: radial-gradient(circle, #cbc7c3 .8px, transparent 1px) 275px 2px/4px 4px; clip-path: inset(2px 280px 2px 275px); }
.help { height: 138px; flex: none; background: #fff; border: 1px solid #b3afac; border-left: 0; }
.buttons { display: flex; }
.buttons button { height: 52px; line-height: 48px; }
.left-buttons { gap: 12px; padding-top: 12px; }
.b-add { width: 85px; margin-left: -10px; padding-left: 4px; }
.b-dup { width: 167px; } .b-rem { width: 146px; } .b-ren { width: 147px; } .b-save { width: 93px; }

.splitter { width: 28px; flex: none; display: flex; align-items: center; justify-content: flex-end; padding-right: 5px; }
.splitter svg { width: 6px; height: 10px; }
.right-split { justify-content: flex-start; padding-left: 4px; }

.view { width: 2790px; height: 1748px; background: #5d6d6b; }
.map { shape-rendering: crispEdges; }
.map path, .grid { vector-effect: non-scaling-stroke; }
.floor { fill: #c0c0c0; }
.void { fill: #5d6d6b; }
.ray { fill: none; stroke: #c0c0c0; stroke-width: 1.500px; }
.ray .wide { stroke-width: 2.600px; }
.streak { fill: none; stroke: #5d6d6b; stroke-width: 1.500px; stroke-dasharray: 9 4 5 3; }
.wall { fill: none; stroke: #0f0f0f; stroke-width: 3px; }
.speck { fill: none; stroke: #0f0f0f; stroke-width: 2px; }
.grid { fill: none; stroke: #a0a0a4; stroke-opacity: .5; stroke-width: 1.300px; }

.views { width: 414px; display: flex; flex-direction: column; flex: none; }
.views .dock-title { height: 42px; }
.cam { width: 18px; height: 16px; margin: 0 10px 0 4px; }
.type-row { height: 64px; display: flex; align-items: flex-start; padding: 6px 0 0 2px; flex: none; }
.type-row label { width: 102px; line-height: 52px; }
.combo {
  width: 207px; height: 46px; display: flex; align-items: center; justify-content: space-between; margin-top: 3px;
  padding: 0 6px 0 4px; border: 1px solid #a9a5a2; border-radius: 3px; background: linear-gradient(#fff, #eceae7);
}
.combo svg { width: 8px; height: 5px; }
.zero { width: 89px; height: 52px; margin-left: 12px; }
.views .tree { height: 1568px; margin-top: 8px; flex: none; background-position: 206px 0; }
.views .row { height: 38px; }
.views .row .name { width: 209px; padding-left: 83px; position: relative; }
.views .row .box { margin-left: 0; }
.views .row.head { font-weight: bold; }
.views .row.head .name { padding-left: 43px; }
.views .down { position: absolute; left: 14px; width: 10px; height: 6px; }
.views .row .right { position: absolute; left: 55px; }
.right-buttons { gap: 12px; padding: 12px 0 0 2px; }

.hsplit { height: 12px; flex: none; background: radial-gradient(circle, #cbc7c3 .8px, transparent 1px) 1906px 3px/3px 4px; clip-path: inset(3px 1910px 5px 1906px); }
.time .dock-title { height: 42px; }
.clock { width: 17px; height: 17px; margin: 2px 12px 0 -4px; }
.fields { display: flex; align-items: center; height: 56px; padding-left: 4px; }
.field { width: 329px; height: 46px; line-height: 44px; padding-left: 2px; background: #fff; border: 1px solid #a9a5a2; border-radius: 4px; flex: none; }
.l1 { width: 180px; } .l2 { width: 239px; padding-left: 11px; } .l3 { width: 194px; padding-left: 13px; } .l4 { width: 240px; padding-left: 13px; }
.experimental { display: flex; align-items: center; margin-left: auto; width: 270px; gap: 10px; }
.experimental .box { margin-left: 0; }
.status { display: flex; align-items: center; height: 50px; padding-bottom: 1px; }
.status button { width: 124px; margin-left: -10px; padding-left: 6px; height: 44px; line-height: 40px; }
.status p { margin: 0 0 0 6px; }
.status span { margin: 0 1px 3px auto; }
```
